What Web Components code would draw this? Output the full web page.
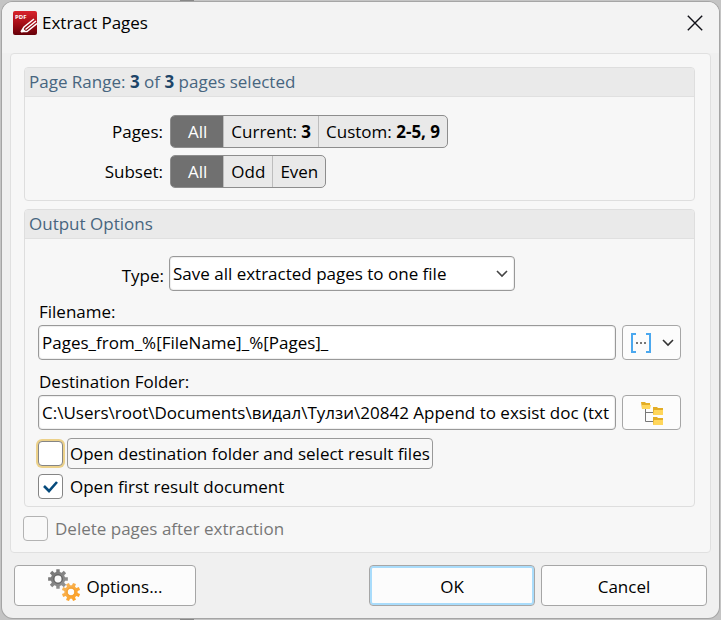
<!DOCTYPE html>
<html lang="en">
<head>
<meta charset="utf-8">
<title>Extract Pages</title>
<style>
html, body { margin: 0; min-height: 100%; }
html { height: 100%; }
body { height: 100%; background: linear-gradient(90deg, #c4c4c4 180px, #888 180px 194px, #c4c4c4 194px); font: 17px/24px "Open Sans", "Noto Sans", sans-serif; color: #000; }
</style>
</head>
<body>
<extract-dialog></extract-dialog>
<script>
const define = (name, html, setup) => customElements.define(name, class extends HTMLElement {
  constructor() {
    super();
    this.attachShadow({ mode: "open" }).innerHTML =
      `<style>*{box-sizing:border-box} :host{box-sizing:border-box} button,input,select{font:inherit;color:inherit;margin:0;outline:none}</style>` + html;
  }
  connectedCallback() { if (setup) setup(this, this.shadowRoot); }
});

define("title-bar", `
<style>
:host { display: flex; align-items: center; height: 51px; padding: 0 12px 10px 11px; gap: 5px; background: #f3f3f3; }
h1 { font: inherit; margin: 0; flex: 1; }
svg { display: block; }
button { border: 0; background: none; padding: 4px; }
</style>
<svg width="24" height="24" viewBox="0 0 24 24" aria-hidden="true">
  <defs><linearGradient id="r" x2="0" y2="1"><stop stop-color="#d8232c"/><stop offset=".5" stop-color="#a80f18"/><stop offset="1" stop-color="#650008"/></linearGradient></defs>
  <rect width="24" height="24" rx="2" fill="url(#r)"/>
  <text x="2" y="7.500" font-family="Open Sans, sans-serif" font-size="6" font-weight="700" fill="#fff">PDF</text>
  <path d="M8 21l3-5L21 8M12.500 18.500L23 10M9 20.500h5l10-8" fill="none" stroke="#fff" stroke-width="1.500"/>
  <path d="M8 21.500l2-4 3 3z" fill="#fff"/>
</svg>
<h1><slot></slot></h1>
<button aria-label="Close"><svg width="16" height="16" viewBox="0 0 16 16"><path d="M.8.8l14.400 14.400M15.200.8L.8 15.200" stroke="#111118" stroke-width="1.400"/></svg></button>`);

define("option-group", `
<style>
:host { display: block; border: 1px solid #dedede; border-radius: 4px; }
h2 { margin: 0; font: inherit; color: #47657f; background: #eaeaea; border-bottom: 1px solid #e0e0e0; border-radius: 3px 3px 0 0; padding: 2px 4px; }
</style>
<h2><slot name="heading"></slot></h2><slot></slot>`);

define("segment-bar", `
<style>
:host { display: inline-flex; height: 33px; border: 1px solid #8d8d8d; border-radius: 5px; overflow: hidden; background: #e9e9e9; }
::slotted(button) { border: 0; border-left: 1px solid #bdbdbd; padding: 0 7px; background: none; white-space: nowrap; }
::slotted(button[aria-pressed="true"]) { background: #707070; padding: 0 16px; border-color: #707070; }
::slotted(button[aria-pressed="true"] + button) { border-left: 0; }
</style><slot></slot>`);

define("check-option", `
<style>
:host { display: flex; align-items: center; gap: 4px; }
input { appearance: none; width: 25px; height: 25px; border: 1px solid #858585; border-radius: 4px; background: #fff; flex: none; }
input:checked { background: #fff url('data:image/svg+xml,<svg xmlns="http://www.w3.org/2000/svg" viewBox="0 0 23 23"><path d="M5 11l5 5 8-9" fill="none" stroke="%23064a7c" stroke-width="2.600"/></svg>'); }
label { border: 1px solid transparent; border-radius: 4px; padding: 2px; height: 31px; line-height: 25px; white-space: nowrap; }
:host([current]) input { box-shadow: 0 0 0 2px #ecd18a; }
:host([current]) label { border-color: #999; }
:host([disabled]) { color: #777; }
:host([disabled]) input { border-color: #b3b3b3; background: #f9f9f9; }
</style>
<input type="checkbox" id="c"><label for="c"></label>`, (host, root) => {
  const box = root.querySelector("input");
  box.checked = host.hasAttribute("checked");
  box.disabled = host.hasAttribute("disabled");
  root.querySelector("label").textContent = host.getAttribute("label");
});

define("path-field", `
<style>
:host { display: grid; grid-template-columns: minmax(0, 1fr) 59px; column-gap: 6px; }
label { grid-column: 1 / -1; padding-left: 1px; height: 25px; }
input { width: 100%; height: 35px; border: 1px solid #999; border-radius: 4px; padding: 0 3px; background: #fff; box-shadow: inset 0 0 1px 1px #eee; }
button { height: 35px; border: 1px solid #a6a6a6; border-radius: 4px; background: #fcfcfc; padding: 0; display: flex; align-items: center; justify-content: center; gap: 10px; }
</style>
<label for="f"></label><input id="f" type="text"><button><slot></slot></button>`, (host, root) => {
  root.querySelector("label").textContent = host.getAttribute("label");
  root.querySelector("input").value = host.getAttribute("value");
  root.querySelector("button").setAttribute("aria-label", host.getAttribute("action"));
});

define("type-select", `
<style>
:host { display: flex; align-items: center; }
label { width: 139px; text-align: right; padding: 4px 5px 0 0; }
select { appearance: none; flex: 0 1 346px; min-width: 0; height: 35px; border: 1px solid #999; border-radius: 4px; padding: 0 28px 0 3px; box-shadow: inset 0 0 1px 1px #eee;
 background: #fff url('data:image/svg+xml,<svg xmlns="http://www.w3.org/2000/svg" width="12" height="8" viewBox="0 0 12 8"><path d="M1 1l5 5 5-5" fill="none" stroke="%23444" stroke-width="1.600"/></svg>') no-repeat right 6px center; }
</style>
<label for="t">Type:</label><select id="t"><option>Save all extracted pages to one file</option></select>`);

define("dialog-button", `
<style>
:host { display: block; }
button { width: 100%; height: 41px; border: 1px solid #a6a6a6; border-radius: 4px; background: #fcfcfc; padding: 2px 0 0; display: flex; align-items: center; justify-content: center; gap: 5px; }
:host([primary]) button { box-shadow: inset 0 0 0 2px #a9dcfb; }
</style>
<button><slot></slot></button>`);

define("gear-icon", `
<style>:host { display: block; margin-top: -3px; } svg { display: block; }</style>
<svg width="34" height="34" viewBox="0 0 34 34" aria-hidden="true"><defs>
<linearGradient id="g" x2="1" y2="1"><stop stop-color="#707070"/><stop offset="1" stop-color="#999"/></linearGradient>
<linearGradient id="o" x2="1" y2="1"><stop stop-color="#f5b967"/><stop offset="1" stop-color="#ff9c17"/></linearGradient></defs></svg>`, (host, root) => {
  const svg = root.querySelector("svg");
  const gear = (cx, cy, r, fill, turn) => {
    const points = [];
    for (let i = 0; i < 8; i++) {
      for (const [offset, radius] of [[-0.25, r * 0.72], [-0.17, r], [0.17, r], [0.25, r * 0.72]]) {
        const a = i * Math.PI / 4 + offset + turn;
        points.push((cx + Math.cos(a) * radius).toFixed(2) + " " + (cy + Math.sin(a) * radius).toFixed(2));
      }
    }
    const h = r * 0.34;
    svg.insertAdjacentHTML("beforeend", `<path fill-rule="evenodd" fill="url(#${fill})" d="M${points.join("L")}ZM${cx - h} ${cy}a${h} ${h} 0 1 0 ${2 * h} 0a${h} ${h} 0 1 0 ${-2 * h} 0Z"/><circle cx="${cx}" cy="${cy}" r="${r * .45}" fill="none" stroke="${fill === "g" ? "#666" : "#f5a031"}" stroke-width="1"/>`);
  };
  gear(11, 11, 10, "g", 0);
  gear(24, 24, 9.3, "o", 0.39);
});

define("extract-dialog", `
<style>
:host { display: block; height: 100%; padding: 2px; }
main { height: 100%; display: flex; flex-direction: column; background: #f0f0f0; border-radius: 11px; overflow: hidden; box-shadow: 0 0 0 1px #a5a5a5; }
.panel { flex: 1; margin: 0 8px; padding: 13px 15px 0 13px; background: #f7f7f7; border: 1px solid #e0e0e0; border-radius: 4px; }
.panel > option-group + option-group { margin-top: 8px; }
button[aria-pressed="true"] { color: #fff; }
b[slot], [slot] b { color: #1d4568; }
.ranges { display: grid; grid-template-columns: 138px minmax(0, 1fr); column-gap: 7px; row-gap: 7px; align-items: center; justify-items: start; padding: 18px 0 12px; }
.ranges > span { justify-self: end; }
.output { padding: 17px 13px 4px; }
type-select { margin: 0 0 9px -8px; }
path-field + path-field { margin-top: 10px; }
.checks { display: grid; row-gap: 2px; margin-top: 8px; }
.last { margin: 6px 0 0 -1px; }
footer { display: grid; grid-template-columns: 182px 1fr 166px 166px; column-gap: 6px; padding: 12px 12px; }
footer dialog-button:nth-child(2) { grid-column: 3; }
svg { display: block; }
</style>
<main>
<title-bar>Extract Pages</title-bar>
<div class="panel">
  <option-group>
    <span slot="heading">Page Range: <b>3</b> of <b>3</b> pages selected</span>
    <div class="ranges">
      <span>Pages:</span>
      <segment-bar role="group" aria-label="Pages"><button aria-pressed="true">All</button><button>Current: <b>3</b></button><button>Custom: <b>2-5, 9</b></button></segment-bar>
      <span>Subset:</span>
      <segment-bar role="group" aria-label="Subset"><button aria-pressed="true">All</button><button>Odd</button><button>Even</button></segment-bar>
    </div>
  </option-group>
  <option-group>
    <span slot="heading">Output Options</span>
    <div class="output">
      <type-select></type-select>
      <path-field label="Filename:" value="Pages_from_%[FileName]_%[Pages]_" action="Insert macro">
        <svg width="22" height="22" viewBox="0 0 22 22"><path d="M6 2H2v18h4M16 2h4v18h-4" fill="none" stroke="#4ba8ef" stroke-width="2"/><path d="M6 10h2v2H6zM10 10h2v2h-2zM14 10h2v2h-2z" fill="#777"/></svg>
        <svg width="12" height="8" viewBox="0 0 12 8"><path d="M1 1l5 5 5-5" fill="none" stroke="#333" stroke-width="1.600"/></svg>
      </path-field>
      <path-field label="Destination Folder:" value="C:\\Users\\root\\Documents\\видал\\Тулзи\\20842 Append to exsist doc (txt" action="Browse">
        <svg width="24" height="24" viewBox="0 0 24 24"><path d="M5.500 8v12.500H13M5.500 11.500H13" fill="none" stroke="#777"/><path d="M1 1h4l1 1h4v6H2z" fill="#e3ad25"/><path d="M2 4h9l-1 4H2z" fill="#ffd65b"/><path d="M13 6h4l1 1h5v7H13z" fill="#e3ad25"/><path d="M14 9h9v5H13z" fill="#ffd65b"/><path d="M13 16h4l1 1h5v7H13z" fill="#e3ad25"/><path d="M14 19h9v5H13z" fill="#ffd65b"/></svg>
      </path-field>
      <div class="checks">
        <check-option current label="Open destination folder and select result files"></check-option>
        <check-option checked label="Open first result document"></check-option>
      </div>
    </div>
  </option-group>
  <div class="last"><check-option disabled label="Delete pages after extraction"></check-option></div>
</div>
<footer>
  <dialog-button><gear-icon></gear-icon>Options...</dialog-button>
  <dialog-button primary>OK</dialog-button>
  <dialog-button>Cancel</dialog-button>
</footer>
</main>`);
</script>
</body>
</html>
